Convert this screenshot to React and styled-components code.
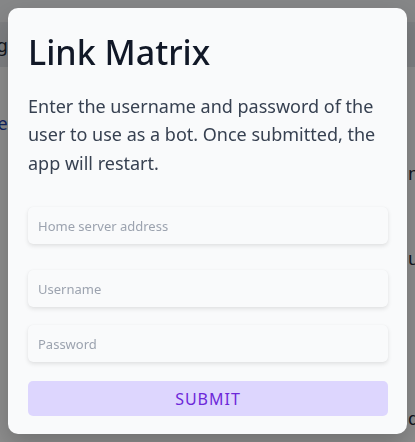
import styled, { createGlobalStyle } from "styled-components";

const GlobalStyle = createGlobalStyle`
  html, body {
    margin: 0;
    padding: 0;
    background: #ffffff;
    font-family: "Noto Sans", "Open Sans", sans-serif;
  }
  * {
    box-sizing: border-box;
  }
`;

// page behind the dialog, mostly hidden by it
const Page = styled.div`
  height: 442px;
  overflow: hidden;
  display: flex;
  flex-direction: column;
  color: #1f2937;
`;

const PageTop = styled.div`
  height: 22px;
  background: #f3f4f6;
`;

const PageHeader = styled.div`
  height: 45px;
  background: #e5e7eb;
  display: flex;
  align-items: center;
  font-size: 18px;
  margin-left: -52px;
`;

const PageBody = styled.div`
  display: flex;
  justify-content: space-between;
  padding-top: 44px;
`;

const PageLink = styled.span`
  color: #1e40af;
  font-size: 18px;
  margin-left: -9px;
`;

const PageSide = styled.div`
  display: flex;
  flex-direction: column;
  align-items: flex-end;
  margin-right: -4px;
`;

const SideWord = styled.span`
  margin-top: ${(p) => p.$top}px;
  font-size: 18px;
  line-height: 24px;
  color: #1f2937;
`;

const Overlay = styled.div`
  position: fixed;
  inset: 0;
  background: rgba(0, 0, 0, 0.45);
  display: flex;
  align-items: center;
  justify-content: center;
`;

const Dialog = styled.div`
  width: calc(100% - 16px);
  background: #f9fafb;
  border-radius: 10px;
  padding: 20px 19px 18px 20px;
  box-shadow: 0 10px 25px rgba(0, 0, 0, 0.2);
`;

const Title = styled.h2`
  margin: 0;
  font-size: 34px;
  font-weight: 500;
  line-height: 48px;
  color: #111827;
`;

const Text = styled.p`
  margin: 16px 0 30px;
  font-size: 18px;
  line-height: 28.5px;
  color: #374151;
`;

const Form = styled.form`
  display: flex;
  flex-direction: column;
`;

const Field = styled.input`
  width: 100%;
  height: 37px;
  margin-bottom: ${(p) => p.$gap}px;
  padding: 0 10px;
  border: none;
  border-radius: 5px;
  background: #f9fafb;
  box-shadow: 0 2px 4px rgba(0, 0, 0, 0.1), 0 0 1px rgba(0, 0, 0, 0.06);
  font-family: inherit;
  font-size: 13px;
  color: #111827;
  outline: none;

  &::placeholder {
    color: #9ca3af;
  }
`;

const SubmitButton = styled.button`
  width: 100%;
  height: 35px;
  border: none;
  border-radius: 5px;
  background: #ddd6fe;
  color: #6d28d9;
  font-family: inherit;
  font-size: 16px;
  letter-spacing: 1px;
  cursor: pointer;
`;

export default function App() {
  return (
    <>
      <GlobalStyle />
      <Page>
        <PageTop />
        <PageHeader>Settings</PageHeader>
        <PageBody>
          <PageLink>te</PageLink>
          <PageSide>
            <SideWord $top={50}>n</SideWord>
            <SideWord $top={61}>u</SideWord>
            <SideWord $top={136}>d</SideWord>
          </PageSide>
        </PageBody>
      </Page>
      <Overlay>
        <Dialog>
          <Title>Link Matrix</Title>
          <Text>
            Enter the username and password of the user to use as a bot. Once
            submitted, the app will restart.
          </Text>
          <Form onSubmit={(e) => e.preventDefault()}>
            <Field type="text" placeholder="Home server address" $gap={26} />
            <Field type="text" placeholder="Username" $gap={18} />
            <Field type="password" placeholder="Password" $gap={19} />
            <SubmitButton type="submit">SUBMIT</SubmitButton>
          </Form>
        </Dialog>
      </Overlay>
    </>
  );
}
